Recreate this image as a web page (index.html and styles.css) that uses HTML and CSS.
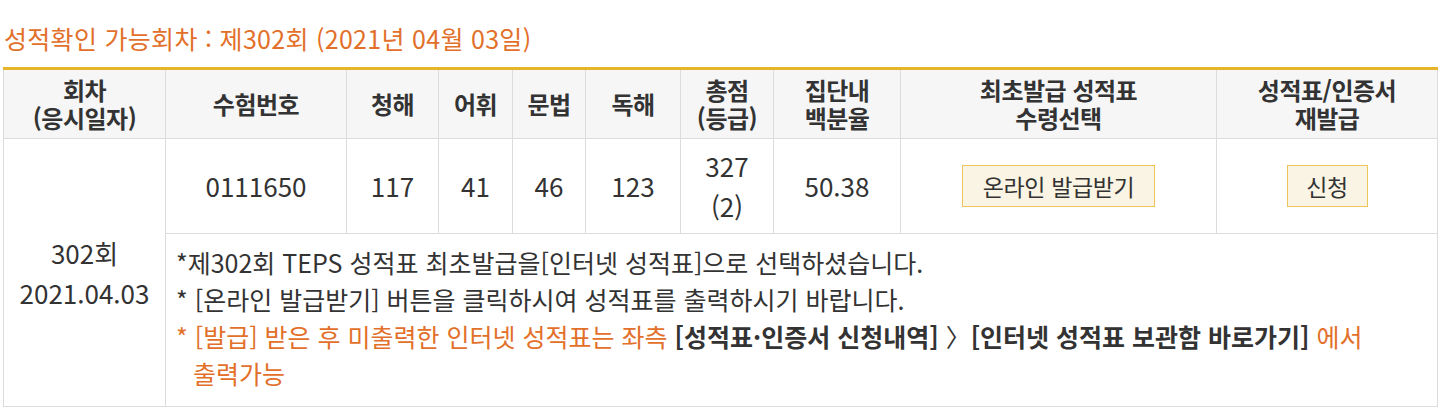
FILE: index.html
```html
<!DOCTYPE html>
<html lang="ko">
<head>
<meta charset="utf-8">
<link rel="stylesheet" href="styles.css">
</head>
<body>
<div class="page">
  <h2 class="title">성적확인 가능회차 : 제302회 (2021년 04월 03일)</h2>
  <table class="score">
    <colgroup>
      <col class="c1"><col class="c2"><col class="c3"><col class="c4"><col class="c5">
      <col class="c6"><col class="c7"><col class="c8"><col class="c9"><col class="c10">
    </colgroup>
    <thead>
      <tr>
        <th>회차<br>(응시일자)</th>
        <th>수험번호</th>
        <th>청해</th>
        <th>어휘</th>
        <th>문법</th>
        <th>독해</th>
        <th>총점<br>(등급)</th>
        <th>집단내<br>백분율</th>
        <th>최초발급 성적표<br>수령선택</th>
        <th>성적표/인증서<br>재발급</th>
      </tr>
    </thead>
    <tbody>
      <tr class="data">
        <td rowspan="2" class="round">302회<br>2021.04.03</td>
        <td>0111650</td>
        <td>117</td>
        <td>41</td>
        <td>46</td>
        <td>123</td>
        <td class="total">327<br>(2)</td>
        <td>50.38</td>
        <td><button class="btn btn-wide">온라인 발급받기</button></td>
        <td><button class="btn btn-narrow">신청</button></td>
      </tr>
      <tr class="notes">
        <td colspan="9">
          <p>*제302회 TEPS 성적표 최초발급을[인터넷 성적표]으로 선택하셨습니다.</p>
          <p>* [온라인 발급받기] 버튼을 클릭하시여 성적표를 출력하시기 바랍니다.</p>
          <p class="warn">* [발급] 받은 후 미출력한 인터넷 성적표는 좌측 <strong>[성적표·인증서 신청내역] <span class="gt">〉</span>[인터넷 성적표 보관함 바로가기]</strong> 에서<br><span class="indent">출력가능</span></p>
        </td>
      </tr>
    </tbody>
  </table>
</div>
</body>
</html>
```

FILE: styles.css
```css
html, body {
  margin: 0;
  padding: 0;
  background: #ffffff;
}

body {
  font-family: "Noto Sans CJK KR", "Noto Sans", sans-serif;
  color: #333333;
}

.page {
  padding: 0 7px 0 3px;
}

.title {
  margin: 0;
  padding: 22px 0 0 1px;
  height: 67px;
  box-sizing: border-box;
  font-size: 25px;
  line-height: 32px;
  font-weight: 400;
  color: #e2702a;
  letter-spacing: 0.3px;
}

.score {
  width: 1434px;
  border-collapse: collapse;
  table-layout: fixed;
  border-top: 3px solid #e6b52a;
  margin-top: 0;
}

.c1 { width: 162px; }
.c2 { width: 181px; }
.c3 { width: 92px; }
.c4 { width: 74px; }
.c5 { width: 73px; }
.c6 { width: 95px; }
.c7 { width: 93px; }
.c8 { width: 127px; }
.c9 { width: 316px; }
.c10 { width: 221px; }

.score th {
  background: #f6f6f7;
  height: 68px;
  padding: 0;
  font-size: 24px;
  line-height: 28px;
  font-weight: 700;
  color: #333333;
  border: 1px solid #dcdcdc;
  border-top: none;
  letter-spacing: -0.5px;
}

.score td {
  border: 1px solid #dcdcdc;
  text-align: center;
  padding: 0;
  font-size: 26px;
  color: #333333;
}

.data td {
  height: 94px;
  line-height: 40px;
}

.round {
  line-height: 40px;
}

.btn {
  font-family: inherit;
  font-size: 23px;
  color: #333333;
  background: #faf4e4;
  border: 1px solid #eec55a;
  height: 42px;
  padding: 0 10px;
  margin: 0;
  line-height: 40px;
  cursor: pointer;
  letter-spacing: -0.4px;
}

.btn-wide {
  width: 193px;
}

.btn-narrow {
  width: 81px;
}

.notes td {
  text-align: left;
  padding: 10px 10px 14px 10px;
  height: 164px;
  box-sizing: border-box;
  vertical-align: top;
}

.notes p {
  margin: 0;
  line-height: 37px;
  font-size: 25px;
  letter-spacing: 0;
}

.warn {
  color: #e2702a;
}

.warn strong {
  color: #333333;
  font-weight: 700;
}

.gt {
  font-weight: 400;
}

.indent {
  padding-left: 17px;
}
```
